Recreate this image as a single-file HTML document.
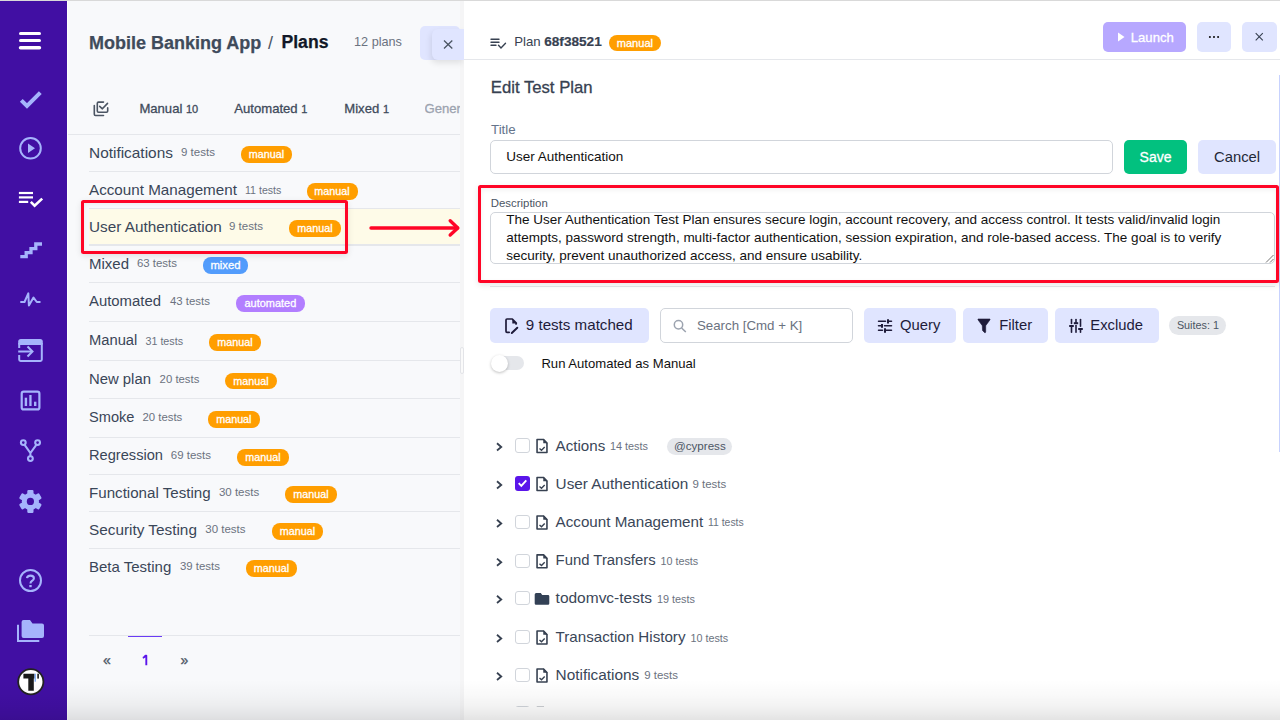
<!DOCTYPE html>
<html><head><meta charset="utf-8"><style>
*{margin:0;padding:0}
html,body{width:1280px;height:720px;overflow:hidden;background:#fff;font-family:"Liberation Sans", sans-serif}
.t{position:absolute;line-height:1;white-space:nowrap}
.row{position:absolute;height:40px;display:flex;align-items:center;white-space:nowrap}
.nm{font-size:15.2px;color:#3a4658;line-height:40px}
.ct{font-size:11.5px;color:#6b7280;margin-left:8px;position:relative;top:-2px}
.bd{-webkit-text-stroke:0.3px #fff;color:#fff;border-radius:8px;height:16.4px;line-height:16.6px;text-align:center}
.tr{position:absolute;height:40px;display:flex;align-items:center;white-space:nowrap}
.tn{font-size:15.15px;color:#3a4658}
.tc{font-size:10.8px;color:#6b7280;margin-left:5px;position:relative;top:1.5px}
.tg{font-size:11.5px;color:#4b5563;background:#e5e7eb;border-radius:9px;height:17px;line-height:17px;padding:0 7px;margin-left:19px;position:relative;top:1px}
</style></head><body>
<div style="position:absolute;left:68px;top:0px;width:395px;height:720px;background:#f8f9fb"></div>
<div class="t" style="left:89px;top:33.76px;font-size:18px;color:#3f4b5b;font-weight:700;-webkit-text-stroke:0.25px currentColor">Mobile Banking App</div>
<div class="t" style="left:268px;top:33.76px;font-size:18px;color:#4b5563;font-weight:400;">/</div>
<div class="t" style="left:281.5px;top:34.10px;font-size:17.6px;color:#111827;font-weight:700;-webkit-text-stroke:0.25px currentColor">Plans</div>
<div class="t" style="left:354px;top:35.75px;font-size:12.7px;color:#6b7280;font-weight:400;">12 plans</div>
<div style="position:absolute;left:420px;top:26px;width:40px;height:34px;background:#e0e5ff;border-radius:5px"></div>
<div class="t" style="left:139.4px;top:102.01px;font-size:13.1px;color:#3f4b5b;font-weight:400;-webkit-text-stroke:0.3px currentColor;">Manual <span style="font-size:11px">10</span></div>
<div class="t" style="left:234.3px;top:102.01px;font-size:13.1px;color:#3f4b5b;font-weight:400;-webkit-text-stroke:0.3px currentColor;">Automated <span style="font-size:11px">1</span></div>
<div class="t" style="left:344.3px;top:102.01px;font-size:13.1px;color:#3f4b5b;font-weight:400;-webkit-text-stroke:0.3px currentColor;">Mixed <span style="font-size:11px">1</span></div>
<div class="t" style="left:424.5px;top:102.01px;font-size:13.1px;color:#9ca3af;font-weight:400;-webkit-text-stroke:0.3px currentColor;width:36px;overflow:hidden">Gener</div>
<div style="position:absolute;left:68px;top:134px;width:392px;height:1px;background:#e5e7eb"></div>
<div class="t" style="left:89px;top:144.75px;font-size:15.42px;color:#3a4658;font-weight:400;">Notifications</div>
<div class="t" style="left:181px;top:147.33px;font-size:11.54px;color:#6b7280;font-weight:400;">9 tests</div>
<div class="t bd" style="left:241px;top:146.30px;width:51.0px;background:#ff9e00;font-size:10.77px">manual</div>
<div style="position:absolute;left:89px;top:171px;width:371px;height:1px;background:#e5e7eb"></div>
<div class="t" style="left:89px;top:181.92px;font-size:15.21px;color:#3a4658;font-weight:400;">Account Management</div>
<div class="t" style="left:245px;top:185.13px;font-size:10.6px;color:#6b7280;font-weight:400;">11 tests</div>
<div class="t bd" style="left:306.5px;top:183.30px;width:51.0px;background:#ff9e00;font-size:10.77px">manual</div>
<div style="position:absolute;left:89px;top:208px;width:371px;height:37px;background:#fefbe8;border-top:1px solid #e5e7eb;border-bottom:1px solid #e5e7eb;box-sizing:border-box"></div>
<div class="t" style="left:89px;top:218.85px;font-size:15.3px;color:#3a4658;font-weight:400;">User Authentication</div>
<div class="t" style="left:229px;top:221.33px;font-size:11.54px;color:#6b7280;font-weight:400;">9 tests</div>
<div class="t bd" style="left:289px;top:220.30px;width:51.8px;background:#ff9e00;font-size:10.77px">manual</div>
<div style="position:absolute;left:89px;top:245px;width:371px;height:1px;background:#e5e7eb"></div>
<div class="t" style="left:89px;top:256.10px;font-size:15.0px;color:#3a4658;font-weight:400;">Mixed</div>
<div class="t" style="left:136.9px;top:258.41px;font-size:11.45px;color:#6b7280;font-weight:400;">63 tests</div>
<div class="t bd" style="left:203px;top:257.30px;width:45.0px;background:#529cfc;font-size:11.32px">mixed</div>
<div style="position:absolute;left:89px;top:282px;width:371px;height:1px;background:#e5e7eb"></div>
<div class="t" style="left:89px;top:294.20px;font-size:14.89px;color:#3a4658;font-weight:400;">Automated</div>
<div class="t" style="left:170px;top:296.43px;font-size:11.42px;color:#6b7280;font-weight:400;">43 tests</div>
<div class="t bd" style="left:235.8px;top:295.30px;width:69.2px;background:#b27eff;font-size:10.96px">automated</div>
<div style="position:absolute;left:89px;top:321px;width:371px;height:1px;background:#e5e7eb"></div>
<div class="t" style="left:89px;top:333.33px;font-size:14.73px;color:#3a4658;font-weight:400;">Manual</div>
<div class="t" style="left:145.5px;top:336.03px;font-size:10.71px;color:#6b7280;font-weight:400;">31 tests</div>
<div class="t bd" style="left:209px;top:334.30px;width:52.0px;background:#ff9e00;font-size:10.77px">manual</div>
<div style="position:absolute;left:89px;top:360px;width:371px;height:1px;background:#e5e7eb"></div>
<div class="t" style="left:89px;top:371.71px;font-size:14.87px;color:#3a4658;font-weight:400;">New plan</div>
<div class="t" style="left:159.6px;top:373.98px;font-size:11.36px;color:#6b7280;font-weight:400;">20 tests</div>
<div class="t bd" style="left:225.2px;top:372.80px;width:51.6px;background:#ff9e00;font-size:10.77px">manual</div>
<div style="position:absolute;left:89px;top:398px;width:371px;height:1px;background:#e5e7eb"></div>
<div class="t" style="left:89px;top:410.44px;font-size:14.6px;color:#3a4658;font-weight:400;">Smoke</div>
<div class="t" style="left:142.5px;top:412.48px;font-size:11.36px;color:#6b7280;font-weight:400;">20 tests</div>
<div class="t bd" style="left:208px;top:411.30px;width:51.7px;background:#ff9e00;font-size:10.77px">manual</div>
<div style="position:absolute;left:89px;top:437px;width:371px;height:1px;background:#e5e7eb"></div>
<div class="t" style="left:89px;top:448.42px;font-size:14.63px;color:#3a4658;font-weight:400;">Regression</div>
<div class="t" style="left:170.8px;top:450.38px;font-size:11.48px;color:#6b7280;font-weight:400;">69 tests</div>
<div class="t bd" style="left:237px;top:449.30px;width:52.0px;background:#ff9e00;font-size:10.77px">manual</div>
<div style="position:absolute;left:89px;top:474px;width:371px;height:1px;background:#e5e7eb"></div>
<div class="t" style="left:89px;top:484.99px;font-size:15.13px;color:#3a4658;font-weight:400;">Functional Testing</div>
<div class="t" style="left:218.9px;top:487.36px;font-size:11.51px;color:#6b7280;font-weight:400;">30 tests</div>
<div class="t bd" style="left:285px;top:486.30px;width:52.0px;background:#ff9e00;font-size:10.77px">manual</div>
<div style="position:absolute;left:89px;top:511px;width:371px;height:1px;background:#e5e7eb"></div>
<div class="t" style="left:89px;top:521.81px;font-size:15.34px;color:#3a4658;font-weight:400;">Security Testing</div>
<div class="t" style="left:205.3px;top:524.36px;font-size:11.51px;color:#6b7280;font-weight:400;">30 tests</div>
<div class="t bd" style="left:272px;top:523.30px;width:51.0px;background:#ff9e00;font-size:10.77px">manual</div>
<div style="position:absolute;left:89px;top:548px;width:371px;height:1px;background:#e5e7eb"></div>
<div class="t" style="left:89px;top:559.10px;font-size:15.0px;color:#3a4658;font-weight:400;">Beta Testing</div>
<div class="t" style="left:180px;top:561.43px;font-size:11.42px;color:#6b7280;font-weight:400;">39 tests</div>
<div class="t bd" style="left:246.3px;top:560.30px;width:50.4px;background:#ff9e00;font-size:10.77px">manual</div>
<div style="position:absolute;left:89px;top:635px;width:371px;height:1px;background:#e5e7eb"></div>
<div style="position:absolute;left:128px;top:635.6px;width:34px;height:1.7px;background:#6a3cf5"></div>
<div class="t" style="left:103px;top:653.15px;font-size:14px;color:#4b5563;font-weight:400;-webkit-text-stroke:0.3px currentColor;">&laquo;</div>
<div class="t" style="left:180.5px;top:653.15px;font-size:14px;color:#4b5563;font-weight:400;-webkit-text-stroke:0.3px currentColor;">&raquo;</div>
<div style="position:absolute;left:81px;top:200.3px;width:267.3px;height:53.7px;border:3px solid #ff0526;border-radius:2.5px;box-sizing:border-box;box-shadow:0 2px 6px rgba(0,0,0,0.10), inset 0 1px 4px rgba(0,0,0,0.06)"></div>
<div style="position:absolute;left:460px;top:0px;width:4px;height:720px;background:#f5f5f6"></div>
<div style="position:absolute;left:460.4px;top:347.2px;width:3.2px;height:27.1px;border:1px solid #e3e4e8;border-radius:2px;background:#fafafa;box-sizing:border-box"></div>
<div style="position:absolute;left:431.7px;top:29px;width:32.3px;height:30.6px;background:#e0e5ff;border-radius:6px 0 0 6px;box-shadow:-1px 3px 6px rgba(0,0,0,0.10)"></div>
<div style="position:absolute;left:463.75px;top:0px;width:816.25px;height:720px;background:#fff"></div>
<div style="position:absolute;left:463.75px;top:59px;width:816.25px;height:1px;background:#e5e7eb"></div>
<div class="t" style="left:514.2px;top:34.73px;font-size:13.2px;color:#374151;font-weight:400;">Plan <b style="font-size:13.6px;-webkit-text-stroke:0.2px currentColor">68f38521</b></div>
<div class="t" style="left:609px;top:35.2px;width:51.8px;height:15.7px;background:#ff9e00;border-radius:8px;font-size:11.1px;line-height:16.3px;text-align:center;color:#fff;-webkit-text-stroke:0.3px #fff">manual</div>
<div style="position:absolute;left:1103px;top:22px;width:82.7px;height:30px;background:#b7a8ff;border-radius:5px"></div>
<div class="t" style="left:1130.8px;top:30.81px;font-size:13.1px;color:#fff;font-weight:400;-webkit-text-stroke:0.3px currentColor;">Launch</div>
<div style="position:absolute;left:1197.2px;top:22px;width:33.5px;height:30px;background:#e0e5ff;border-radius:5px"></div>
<div style="position:absolute;left:1242px;top:22px;width:34.7px;height:30px;background:#e0e5ff;border-radius:5px"></div>
<div style="position:absolute;left:1279px;top:75px;width:1px;height:377px;background:#c7d2fe"></div>
<div class="t" style="left:490.8px;top:79.86px;font-size:16.7px;color:#374151;font-weight:400;-webkit-text-stroke:0.3px currentColor;">Edit Test Plan</div>
<div class="t" style="left:491px;top:122.74px;font-size:13.3px;color:#64748b;font-weight:400;">Title</div>
<div style="position:absolute;left:490.2px;top:140px;width:622.5px;height:33.6px;border:1px solid #d1d5db;border-radius:5px;box-sizing:border-box"></div>
<div class="t" style="left:506.3px;top:149.57px;font-size:13.5px;color:#111;font-weight:400;">User Authentication</div>
<div style="position:absolute;left:1124.2px;top:140px;width:62.7px;height:33.9px;background:#02c17f;border-radius:5px"></div>
<div class="t" style="left:1139.6px;top:150.05px;font-size:14px;color:#fff;font-weight:400;-webkit-text-stroke:0.3px currentColor;">Save</div>
<div style="position:absolute;left:1198px;top:140px;width:77.8px;height:33.9px;background:#e0e5ff;border-radius:5px"></div>
<div class="t" style="left:1214px;top:150.07px;font-size:14.8px;color:#1f2937;font-weight:400;">Cancel</div>
<div class="t" style="left:490.8px;top:197.55px;font-size:11.4px;color:#4b5563;font-weight:400;">Description</div>
<div style="position:absolute;left:490.3px;top:212.2px;width:784.4px;height:51.8px;border:1px solid #d1d5db;border-radius:5px;box-sizing:border-box"></div>
<div class="t" style="left:506.3px;top:212.77px;font-size:13.5px;color:#111;font-weight:400;">The User Authentication Test Plan ensures secure login, account recovery, and access control. It tests valid/invalid login</div>
<div class="t" style="left:506.3px;top:230.67px;font-size:13.5px;color:#111;font-weight:400;">attempts, password strength, multi-factor authentication, session expiration, and role-based access. The goal is to verify</div>
<div class="t" style="left:506.3px;top:248.57px;font-size:13.5px;color:#111;font-weight:400;">security, prevent unauthorized access, and ensure usability.</div>
<div style="position:absolute;left:490px;top:285.5px;width:785px;height:1px;background:#e5e7eb"></div>
<div style="position:absolute;left:478px;top:184.9px;width:801.2px;height:98.4px;border:3.3px solid #ff0526;border-radius:2.5px;box-sizing:border-box;box-shadow:0 2px 6px rgba(0,0,0,0.10), inset 0 2px 5px rgba(0,0,0,0.06)"></div>
<div style="position:absolute;left:490.2px;top:308.3px;width:158.5px;height:34.4px;background:#e0e5ff;border-radius:5px"></div>
<div class="t" style="left:525.8px;top:316.88px;font-size:15.15px;color:#1e1b3a;font-weight:400;">9 tests matched</div>
<div style="position:absolute;left:660.2px;top:308.3px;width:193px;height:34.4px;border:1px solid #d1d5db;border-radius:5px;box-sizing:border-box;background:#fff"></div>
<div class="t" style="left:696.9px;top:318.94px;font-size:13.3px;color:#6b7280;font-weight:400;">Search [Cmd + K]</div>
<div style="position:absolute;left:864px;top:308.3px;width:92px;height:34.4px;background:#e0e5ff;border-radius:5px"></div>
<div class="t" style="left:900px;top:317.67px;font-size:14.8px;color:#1e1b3a;font-weight:400;">Query</div>
<div style="position:absolute;left:963px;top:308.3px;width:85px;height:34.4px;background:#e0e5ff;border-radius:5px"></div>
<div class="t" style="left:999.2px;top:317.67px;font-size:14.8px;color:#1e1b3a;font-weight:400;">Filter</div>
<div style="position:absolute;left:1055px;top:308.3px;width:104px;height:34.4px;background:#e0e5ff;border-radius:5px"></div>
<div class="t" style="left:1090.3px;top:317.67px;font-size:14.8px;color:#1e1b3a;font-weight:400;">Exclude</div>
<div style="position:absolute;left:1169px;top:316px;width:57px;height:18.8px;background:#e5e7eb;border-radius:9.4px"></div>
<div class="t" style="left:1176.9px;top:319.86px;font-size:10.8px;color:#4b5563;font-weight:400;">Suites: 1</div>
<div style="position:absolute;left:497px;top:355.5px;width:27px;height:14px;background:#e5e7eb;border-radius:7px"></div>
<div style="position:absolute;left:490.5px;top:354.5px;width:17px;height:17px;background:#fff;border-radius:50%;box-shadow:0 1px 3px rgba(0,0,0,0.25)"></div>
<div class="t" style="left:541.4px;top:356.61px;font-size:13.1px;color:#111;font-weight:400;">Run Automated as Manual</div>
<div style="position:absolute;left:515.25px;top:438.25px;width:14.5px;height:14.25px;border:1.2px solid #d1d5db;border-radius:3px;box-sizing:border-box;background:#fff"></div>
<div class="t" style="left:555.6px;top:437.68px;font-size:15.14px;color:#3a4658;font-weight:400;">Actions</div>
<div class="t" style="left:610px;top:441.12px;font-size:10.85px;color:#6b7280;font-weight:400;">14 tests</div>
<div style="position:absolute;left:667px;top:438px;width:64.75px;height:17px;background:#e5e7eb;border-radius:8.5px"></div>
<div class="t" style="left:674px;top:439.68px;font-size:11.6px;color:#4b5563;font-weight:400;">@cypress</div>
<div style="position:absolute;left:515.25px;top:476.25px;width:14.5px;height:14.25px;background:#5a15ea;border-radius:3px"></div>
<div class="t" style="left:555.6px;top:475.55px;font-size:15.3px;color:#3a4658;font-weight:400;">User Authentication</div>
<div class="t" style="left:692.5px;top:478.60px;font-size:11.46px;color:#6b7280;font-weight:400;">9 tests</div>
<div style="position:absolute;left:515.25px;top:514.75px;width:14.5px;height:14.25px;border:1.2px solid #d1d5db;border-radius:3px;box-sizing:border-box;background:#fff"></div>
<div class="t" style="left:555.6px;top:514.15px;font-size:15.18px;color:#3a4658;font-weight:400;">Account Management</div>
<div class="t" style="left:708px;top:517.97px;font-size:10.43px;color:#6b7280;font-weight:400;">11 tests</div>
<div style="position:absolute;left:515.25px;top:553.55px;width:14.5px;height:14.25px;border:1.2px solid #d1d5db;border-radius:3px;box-sizing:border-box;background:#fff"></div>
<div class="t" style="left:555.6px;top:553.20px;font-size:14.89px;color:#3a4658;font-weight:400;">Fund Transfers</div>
<div class="t" style="left:660.5px;top:556.47px;font-size:10.78px;color:#6b7280;font-weight:400;">10 tests</div>
<div style="position:absolute;left:515.25px;top:590.75px;width:14.5px;height:14.25px;border:1.2px solid #d1d5db;border-radius:3px;box-sizing:border-box;background:#fff"></div>
<div class="t" style="left:555.6px;top:589.89px;font-size:15.49px;color:#3a4658;font-weight:400;">todomvc-tests</div>
<div class="t" style="left:657px;top:593.62px;font-size:10.85px;color:#6b7280;font-weight:400;">19 tests</div>
<div style="position:absolute;left:515.25px;top:629.75px;width:14.5px;height:14.25px;border:1.2px solid #d1d5db;border-radius:3px;box-sizing:border-box;background:#fff"></div>
<div class="t" style="left:555.6px;top:629.18px;font-size:15.15px;color:#3a4658;font-weight:400;">Transaction History</div>
<div class="t" style="left:690.5px;top:632.67px;font-size:10.78px;color:#6b7280;font-weight:400;">10 tests</div>
<div style="position:absolute;left:515.25px;top:667.75px;width:14.5px;height:14.25px;border:1.2px solid #d1d5db;border-radius:3px;box-sizing:border-box;background:#fff"></div>
<div class="t" style="left:555.6px;top:667.00px;font-size:15.36px;color:#3a4658;font-weight:400;">Notifications</div>
<div class="t" style="left:644.25px;top:670.10px;font-size:11.46px;color:#6b7280;font-weight:400;">9 tests</div>
<div style="position:absolute;left:515.25px;top:706.25px;width:14.5px;height:14.25px;border:1.2px solid #d1d5db;border-radius:3px;box-sizing:border-box;background:#fff"></div>
<svg style="position:absolute;left:0;top:0" width="1280" height="720" viewBox="0 0 1280 720">
 <rect x="0" y="0" width="67" height="720" fill="#410fa3"/>
 <rect x="67" y="0" width="1" height="720" fill="#fff"/>
 <g stroke="#fff" stroke-width="3" stroke-linecap="round">
  <line x1="20.5" y1="33.5" x2="39.5" y2="33.5"/>
  <line x1="20.5" y1="40.5" x2="39.5" y2="40.5"/>
  <line x1="20.5" y1="47.8" x2="39.5" y2="47.8" stroke-width="3.4"/>
 </g>
 <path d="M21.3 100.3 L27 106 L40.3 92.7" fill="none" stroke="#a5b4fc" stroke-width="4"/>
 <circle cx="30.5" cy="148.3" r="10.3" fill="none" stroke="#a5b4fc" stroke-width="2"/>
 <path d="M28 143.5 L28 153 L35 148.3 Z" fill="#a5b4fc"/>
 <g stroke="#fff" stroke-width="2.2" fill="none">
  <line x1="18.9" y1="193" x2="33" y2="193"/>
  <line x1="18.9" y1="197.4" x2="33" y2="197.4"/>
  <line x1="18.9" y1="201.9" x2="28.2" y2="201.9"/>
  <path d="M30.8 201.9 L34.6 205.6 L42.2 198.6" stroke-width="2.6"/>
 </g>
 <path d="M20.3 256.7 L26.2 256.7 L26.2 252.6 L31 252.6 L31 248.6 L35.8 248.6 L35.8 244 L42 244" fill="none" stroke="#a5b4fc" stroke-width="3.3" stroke-linejoin="miter"/>
 <path d="M20.3 302 L24.5 302 L28.3 293.3 L28.9 305.5 L33.5 297.6 L36.8 302 L40.5 302" fill="none" stroke="#a5b4fc" stroke-width="2" stroke-linejoin="round"/>
 <path d="M18.2 344.5 L18.2 341.5 Q18.2 338.9 20.8 338.9 L40.2 338.9 Q42.8 338.9 42.8 341.5 L42.8 344.5 Z" fill="#a5b4fc"/>
 <g fill="none" stroke="#a5b4fc" stroke-width="2">
  <path d="M19.2 348 L19.2 344 L41.8 344 L41.8 359.5 Q41.8 360.9 40.4 360.9 L20.6 360.9 Q19.2 360.9 19.2 359.5 L19.2 355"/>
  <line x1="18.2" y1="351.5" x2="32" y2="351.5"/>
  <path d="M27.5 346.5 L32.5 351.5 L27.5 356.5"/>
  <rect x="21.7" y="391.7" width="17.7" height="17.7" rx="2" stroke-width="2.2"/>
  <circle cx="23.3" cy="442.6" r="2.4" stroke-width="2.1"/>
  <circle cx="37.6" cy="442.6" r="2.4" stroke-width="2.1"/>
  <circle cx="30.4" cy="458.6" r="2.4" stroke-width="2.1"/>
  <path d="M24.6 444.8 L30.4 453 L36.3 444.8 M30.4 453 L30.4 456.2" stroke-width="2.1"/>
  <circle cx="30.5" cy="580.5" r="10.5"/>
 </g>
 <g fill="#a5b4fc">
  <rect x="24.7" y="397.7" width="2.4" height="8.3"/>
  <rect x="29.3" y="395" width="2.3" height="11"/>
  <rect x="34" y="401.7" width="2.4" height="4.3"/>
 </g>
 <g fill="#a5b4fc">
  <circle cx="30.4" cy="501.4" r="8.6"/>
  <rect x="27.3" y="489.9" width="6.2" height="23" rx="1.2"/>
  <rect x="27.3" y="489.9" width="6.2" height="23" rx="1.2" transform="rotate(60 30.4 501.4)"/>
  <rect x="27.3" y="489.9" width="6.2" height="23" rx="1.2" transform="rotate(120 30.4 501.4)"/>
 </g>
 <circle cx="30.4" cy="501.4" r="3.6" fill="#410fa3"/>
 <path d="M27 578.2 Q27.2 575.6 30.5 575.6 Q33.9 575.6 33.9 578.2 Q33.9 580 31.9 581 Q30.5 581.8 30.5 583.4" fill="none" stroke="#a5b4fc" stroke-width="2.1"/>
 <rect x="29.3" y="585" width="2.4" height="2.2" fill="#a5b4fc"/>
 <path d="M21.6 622 Q21.6 620 23.6 620 L30 620 L32.5 623.6 L42 623.6 Q44 623.6 44 625.6 L44 636 Q44 638 42 638 L23.6 638 Q21.6 638 21.6 636 Z" fill="#a5b4fc"/>
 <path d="M18 624.8 L18 641 L39.3 641" fill="none" stroke="#a5b4fc" stroke-width="2"/>
 <circle cx="30.8" cy="681.7" r="12.6" fill="#fff" stroke="#222" stroke-width="1.8"/>
 <path d="M23.4 673.7 L34.4 673.7 L34.4 678.6 L33.8 678.6 L33.8 690.8 L28.3 690.8 L28.3 678.6 L23.4 678.6 Z" fill="#1a1a1a"/>
 <rect x="34.7" y="673.7" width="0.9" height="8" fill="#3b82f6"/>
 <rect x="37.3" y="673.7" width="1.6" height="4.9" fill="#1a1a1a"/>

 <!-- left panel x on floating button -->
 <path d="M444 40.5 L452.3 48.5 M452.3 40.5 L444 48.5" stroke="#4b5563" stroke-width="1.3"/>
 <path d="M146.3 665.3 L146.3 655.6 L145.6 655.6 Q144.6 657.3 142.8 657.8" fill="none" stroke="#5b16ea" stroke-width="1.9" stroke-linejoin="round"/>
 <!-- tabs icon -->
 <g fill="none" stroke="#4b5563" stroke-width="1.6" stroke-linejoin="round" stroke-linecap="round">
  <path d="M103.5 102.1 L98.5 102.1 Q97.3 102.1 97.3 103.3 L97.3 111 Q97.3 112.2 98.5 112.2 L106.5 112.2 Q107.7 112.2 107.7 111 L107.7 107.9"/>
  <path d="M94.3 105.6 L94.3 114.3 Q94.3 115.5 95.5 115.5 L103.5 115.5"/>
  <path d="M99.7 106.3 L102.4 108.8 L107.5 103.4"/>
 </g>
 <!-- left arrow annotation -->
 <g fill="none" stroke="#ff0526" stroke-width="3.4" stroke-linecap="round" stroke-linejoin="round">
  <line x1="371" y1="228" x2="457.5" y2="228"/>
  <path d="M450.2 220.7 L457.8 228 L450.2 235"/>
 </g>
 <!-- right header list icon -->
 <g fill="none" stroke="#374151" stroke-width="1.4" stroke-linecap="round">
  <line x1="491" y1="39.2" x2="499" y2="39.2"/>
  <line x1="491" y1="42.2" x2="499" y2="42.2"/>
  <line x1="491" y1="45.2" x2="496" y2="45.2"/>
  <path d="M498.5 45.3 L501 48 L505.5 43.3"/>
 </g>
 <!-- launch play -->
 <path d="M1118 32.5 L1118 41.5 L1124.5 37 Z" fill="#fff"/>
 <g fill="#111"><circle cx="1209.9" cy="37" r="1.05"/><circle cx="1214" cy="37" r="1.05"/><circle cx="1218.1" cy="37" r="1.05"/></g>
 <path d="M1255.7 33.2 L1262.8 40.3 M1262.8 33.2 L1255.7 40.3" stroke="#374151" stroke-width="1.1"/>
 <!-- textarea resize -->
 <g stroke="#666" stroke-width="0.9"><line x1="1273.5" y1="255" x2="1266" y2="262.5"/><line x1="1273.5" y1="259" x2="1270" y2="262.5"/></g>
 <!-- doc edit icon -->
 <g fill="none" stroke="#1e1b3a" stroke-width="1.7" stroke-linejoin="round" stroke-linecap="round">
  <path d="M509.2 332.3 L507 332.3 Q506 332.3 506 331.3 L506 320 Q506 319 507 319 L512.3 319 L516.3 323.2 L516 324"/>
  <line x1="511.8" y1="333" x2="517.3" y2="327.8" stroke-width="2"/>
 </g>
 <path d="M512.3 319 L516.5 323.4 L512.3 323.4 Z" fill="#1e1b3a"/>
 <!-- search icon -->
 <g fill="none" stroke="#9ca3af" stroke-width="1.5"><circle cx="678.5" cy="324.8" r="4.2"/><line x1="681.6" y1="328" x2="685.8" y2="332"/></g>
 <!-- query icon -->
 <g stroke="#1e1b3a" stroke-width="1.5" stroke-linecap="round">
  <line x1="878.5" y1="321.3" x2="885.5" y2="321.3"/><line x1="888" y1="321.3" x2="891.5" y2="321.3"/>
  <line x1="878.5" y1="325.8" x2="881.5" y2="325.8"/><line x1="884.5" y1="325.8" x2="891.5" y2="325.8"/>
  <line x1="878.5" y1="330.3" x2="882.5" y2="330.3"/><line x1="885" y1="330.3" x2="891.5" y2="330.3"/>
 </g>
 <g stroke="#1e1b3a" stroke-width="2">
  <line x1="888" y1="319.2" x2="888" y2="323.5"/>
  <line x1="882" y1="324" x2="882" y2="327.7"/>
  <line x1="885" y1="328.3" x2="885" y2="332.7"/>
 </g>
 <!-- filter icon -->
 <path d="M978 319 L990 319 L990 319.8 L985.7 325.7 L985.7 332 Q985.5 333 984.7 332.7 L982.5 330.5 L982.3 325.7 L978 319.8 Z" fill="#1e1b3a" stroke="#1e1b3a" stroke-width="0.6" stroke-linejoin="round"/>
 <!-- exclude icon -->
 <g stroke="#1e1b3a" stroke-width="1.6" stroke-linecap="round">
  <line x1="1071.5" y1="319.5" x2="1071.5" y2="323.5"/><line x1="1071.5" y1="326.5" x2="1071.5" y2="332.3"/>
  <line x1="1076" y1="319.5" x2="1076" y2="322.5"/><line x1="1076" y1="325.5" x2="1076" y2="332.3"/>
  <line x1="1080.5" y1="319.5" x2="1080.5" y2="326.3"/><line x1="1080.5" y1="329.3" x2="1080.5" y2="332.3"/>
 </g>
 <g stroke="#1e1b3a" stroke-width="2">
  <line x1="1069.2" y1="326" x2="1073.8" y2="326"/>
  <line x1="1073.8" y1="323.2" x2="1078.2" y2="323.2"/>
  <line x1="1078.2" y1="329" x2="1082.8" y2="329"/>
 </g>
 <path d="M497 443.25 L501.25 447 L497 450.5" fill="none" stroke="#374151" stroke-width="1.8"/><path d="M537.05 439.55 L543.6 439.55 L546.95 443.1 L546.95 452.45 L537.05 452.45 Z" fill="none" stroke="#374151" stroke-width="1.6" stroke-linejoin="round"/><path d="M543.25 438.8 L547.7 443.25 L543.25 443.25 Z" fill="#374151"/><path d="M539.5 448.5 L541.5 450.25 L544.7 447" fill="none" stroke="#374151" stroke-width="1.4"/><path d="M497 481.25 L501.25 485 L497 488.5" fill="none" stroke="#374151" stroke-width="1.8"/><path d="M518.7 483.2 L521.3 485.8 L526.3 480.4" fill="none" stroke="#fff" stroke-width="1.9"/><path d="M537.05 477.55 L543.6 477.55 L546.95 481.1 L546.95 490.45 L537.05 490.45 Z" fill="none" stroke="#374151" stroke-width="1.6" stroke-linejoin="round"/><path d="M543.25 476.8 L547.7 481.25 L543.25 481.25 Z" fill="#374151"/><path d="M539.5 486.5 L541.5 488.25 L544.7 485" fill="none" stroke="#374151" stroke-width="1.4"/><path d="M497 519.75 L501.25 523.5 L497 527.0" fill="none" stroke="#374151" stroke-width="1.8"/><path d="M537.05 516.05 L543.6 516.05 L546.95 519.6 L546.95 528.95 L537.05 528.95 Z" fill="none" stroke="#374151" stroke-width="1.6" stroke-linejoin="round"/><path d="M543.25 515.3 L547.7 519.75 L543.25 519.75 Z" fill="#374151"/><path d="M539.5 525.0 L541.5 526.75 L544.7 523.5" fill="none" stroke="#374151" stroke-width="1.4"/><path d="M497 558.55 L501.25 562.3 L497 565.8" fill="none" stroke="#374151" stroke-width="1.8"/><path d="M537.05 554.8499999999999 L543.6 554.8499999999999 L546.95 558.4 L546.95 567.75 L537.05 567.75 Z" fill="none" stroke="#374151" stroke-width="1.6" stroke-linejoin="round"/><path d="M543.25 554.0999999999999 L547.7 558.55 L543.25 558.55 Z" fill="#374151"/><path d="M539.5 563.8 L541.5 565.55 L544.7 562.3" fill="none" stroke="#374151" stroke-width="1.4"/><path d="M497 595.75 L501.25 599.5 L497 603.0" fill="none" stroke="#374151" stroke-width="1.8"/><path d="M534.7 594.5 Q534.7 593.0 536.2 593.0 L540.8 593.0 L542.2 595.0 L548 595.0 Q549.3 595.0 549.3 596.3 L549.3 603.5 Q549.3 604.8 548 604.8 L536 604.8 Q534.7 604.8 534.7 603.5 Z" fill="#334155"/><path d="M497 634.75 L501.25 638.5 L497 642.0" fill="none" stroke="#374151" stroke-width="1.8"/><path d="M537.05 631.05 L543.6 631.05 L546.95 634.6 L546.95 643.95 L537.05 643.95 Z" fill="none" stroke="#374151" stroke-width="1.6" stroke-linejoin="round"/><path d="M543.25 630.3 L547.7 634.75 L543.25 634.75 Z" fill="#374151"/><path d="M539.5 640.0 L541.5 641.75 L544.7 638.5" fill="none" stroke="#374151" stroke-width="1.4"/><path d="M497 672.75 L501.25 676.5 L497 680.0" fill="none" stroke="#374151" stroke-width="1.8"/><path d="M537.05 669.05 L543.6 669.05 L546.95 672.6 L546.95 681.95 L537.05 681.95 Z" fill="none" stroke="#374151" stroke-width="1.6" stroke-linejoin="round"/><path d="M543.25 668.3 L547.7 672.75 L543.25 672.75 Z" fill="#374151"/><path d="M539.5 678.0 L541.5 679.75 L544.7 676.5" fill="none" stroke="#374151" stroke-width="1.4"/><path d="M497 711.25 L501.25 715 L497 718.5" fill="none" stroke="#374151" stroke-width="1.8"/><path d="M537.05 707.55 L543.6 707.55 L546.95 711.1 L546.95 720.45 L537.05 720.45 Z" fill="none" stroke="#374151" stroke-width="1.6" stroke-linejoin="round"/><path d="M543.25 706.8 L547.7 711.25 L543.25 711.25 Z" fill="#374151"/><path d="M539.5 716.5 L541.5 718.25 L544.7 715" fill="none" stroke="#374151" stroke-width="1.4"/>
</svg>
<div style="position:absolute;left:463.5px;top:707px;width:816.5px;height:13px;background:#fff"></div>
<div style="position:absolute;left:0px;top:680px;width:1280px;height:40px;background:linear-gradient(to bottom, rgba(0,0,0,0) 0%, rgba(0,0,0,0.022) 37.5%, rgba(0,0,0,0.048) 62.5%, rgba(0,0,0,0.085) 87.5%, rgba(0,0,0,0.11) 100%)"></div>
<div style="position:absolute;left:0px;top:0px;width:1280px;height:1px;background:#d9d9d9"></div>
</body></html>
